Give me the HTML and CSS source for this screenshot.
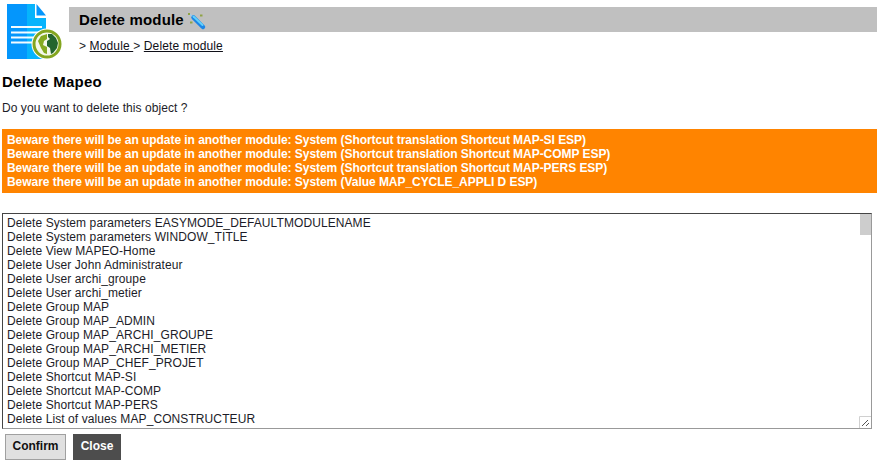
FILE: index.html
```html
<!DOCTYPE html>
<html lang="en">
<head>
<meta charset="utf-8">
<title>Delete module</title>
<link rel="stylesheet" href="styles.css">
</head>
<body>
<header class="header">
  <svg class="logo" width="57" height="58" viewBox="0 0 57 58">
    <path fill="#0496fc" d="M0 0h20v55H0z"/>
    <path fill="#06b4fc" d="M20 0h8v14h11v41H20z"/>
    <path fill="#0496fc" d="M29.500 0L39 11.500h-9.500z"/>
    <path stroke="#f4fbff" stroke-width="2" d="M4 23h31M4 28.500h31M4 33.500h28M4 38.500h24"/>
    <circle cx="40" cy="40" r="15.500" fill="#fff"/>
    <circle cx="40" cy="40" r="13" fill="#f4f8ea" stroke="#83a51f" stroke-width="3"/>
    <path fill="#85aa20" d="M31 37l3-5 6-2v5l-3 2-1 4 4 2v7l-3-1-3-5z"/>
    <path fill="#23652e" d="M41 30l4 0 4 4 2 5-1 5-4 5-2 1-1-6-3-2v-5l3-2-2-2z"/>
  </svg>
  <div class="heading">
    <div class="titlebar">
      <h1 class="title">Delete module</h1>
      <svg class="wand" width="19" height="18" viewBox="0 0 19 18">
        <path stroke="#a3c9e6" stroke-width="1.500" d="M1 1l5 3"/>
        <path stroke="#1c86e6" stroke-width="4.500" stroke-linecap="round" d="M5.500 4.500l9.500 9.500"/>
        <path stroke="#62d0fb" stroke-width="2" stroke-linecap="round" d="M5.500 3.500l9 8.500"/>
        <path fill="#8fa346" d="M12 1.500h2.500v2H12zM2 8.500h2.500v2H2zM0 0h2v2H0z"/>
      </svg>
    </div>
    <nav class="crumbs">&gt; <a>Module </a>&gt; <a>Delete module</a></nav>
  </div>
</header>
<main class="content">
  <h2 class="subtitle">Delete Mapeo</h2>
  <p class="question">Do you want to delete this object ?</p>
  <div class="warning">
    <div>Beware there will be an update in another module: System (Shortcut translation Shortcut MAP-SI ESP)</div>
    <div>Beware there will be an update in another module: System (Shortcut translation Shortcut MAP-COMP ESP)</div>
    <div>Beware there will be an update in another module: System (Shortcut translation Shortcut MAP-PERS ESP)</div>
    <div>Beware there will be an update in another module: System (Value MAP_CYCLE_APPLI D ESP)</div>
  </div>
  <div class="log">
    <div class="lines">
      <div>Delete System parameters EASYMODE_DEFAULTMODULENAME</div>
      <div>Delete System parameters WINDOW_TITLE</div>
      <div>Delete View MAPEO-Home</div>
      <div>Delete User John Administrateur</div>
      <div>Delete User archi_groupe</div>
      <div>Delete User archi_metier</div>
      <div>Delete Group MAP</div>
      <div>Delete Group MAP_ADMIN</div>
      <div>Delete Group MAP_ARCHI_GROUPE</div>
      <div>Delete Group MAP_ARCHI_METIER</div>
      <div>Delete Group MAP_CHEF_PROJET</div>
      <div>Delete Shortcut MAP-SI</div>
      <div>Delete Shortcut MAP-COMP</div>
      <div>Delete Shortcut MAP-PERS</div>
      <div>Delete List of values MAP_CONSTRUCTEUR</div>
    </div>
    <div class="scrollbar">
      <div class="thumb"></div>
      <svg class="grip" width="12" height="12" viewBox="0 0 12 12"><path fill="none" stroke="#d0d0d0" d="M.5 12V.5H12"/><path stroke="#555" d="M3 10l6-6M7 10l3-3"/></svg>
    </div>
  </div>
  <div class="actions">
    <button class="btn confirm">Confirm</button>
    <button class="btn close">Close</button>
  </div>
</main>
</body>
</html>
```
FILE: styles.css
```css
* { box-sizing: border-box; }
body {
  margin: 0;
  height: 463px;
  overflow: hidden;
  background: #fff;
  color: #1c1c28;
  font: 12px/14px "Liberation Sans", Arial, sans-serif;
}
h1, h2, p { margin: 0; }
.header { display: flex; height: 73px; padding: 4px 0 0 7px; }
.logo { flex: none; }
.heading { flex: 1; margin: 3px 0 0 5px; }
.titlebar {
  display: flex;
  align-items: center;
  height: 25px;
  padding-left: 10px;
  background: #c0c0c0;
}
.title { color: #000; font-size: 15px; line-height: 18px; letter-spacing: .18px; }
.wand { margin: 4px 0 0 4px; }
.crumbs { padding: 7px 0 0 10px; white-space: pre; letter-spacing: .13px; }
.crumbs a { text-decoration: underline; color: #101018; }
.content { padding-left: 2px; }
.subtitle { color: #000; font-size: 15px; line-height: 18px; letter-spacing: .28px; }
.question { margin-top: 10px; letter-spacing: .06px; }
.warning {
  height: 64px;
  margin-top: 14px;
  padding: 4px 5px;
  background: #ff8400;
  color: #fff;
  font-weight: bold;
  letter-spacing: -.045px;
}
.log {
  display: flex;
  justify-content: space-between;
  width: 870px;
  height: 216px;
  margin-top: 20px;
  padding-left: 4px;
  border: 1px solid #999;
  border-top-color: #444;
  border-left-color: #444;
}
.lines { padding-top: 2px; letter-spacing: .09px; }
.scrollbar { display: flex; flex-direction: column; justify-content: space-between; width: 12px; }
.thumb { height: 21px; margin-left: 1px; background: #cdcdcd; }
.actions { display: flex; gap: 7px; padding: 5px 0 0 3px; }
.btn {
  height: 26px;
  padding: 0 0 2px;
  border: 1px solid #a0a0a0;
  font: bold 12px/14px "Liberation Sans", Arial, sans-serif;
}
.confirm { width: 61px; background: #e0e0e0; color: #111; }
.close { width: 48px; background: #4d4d4d; border-color: #4d4d4d; color: #fff; }
```
